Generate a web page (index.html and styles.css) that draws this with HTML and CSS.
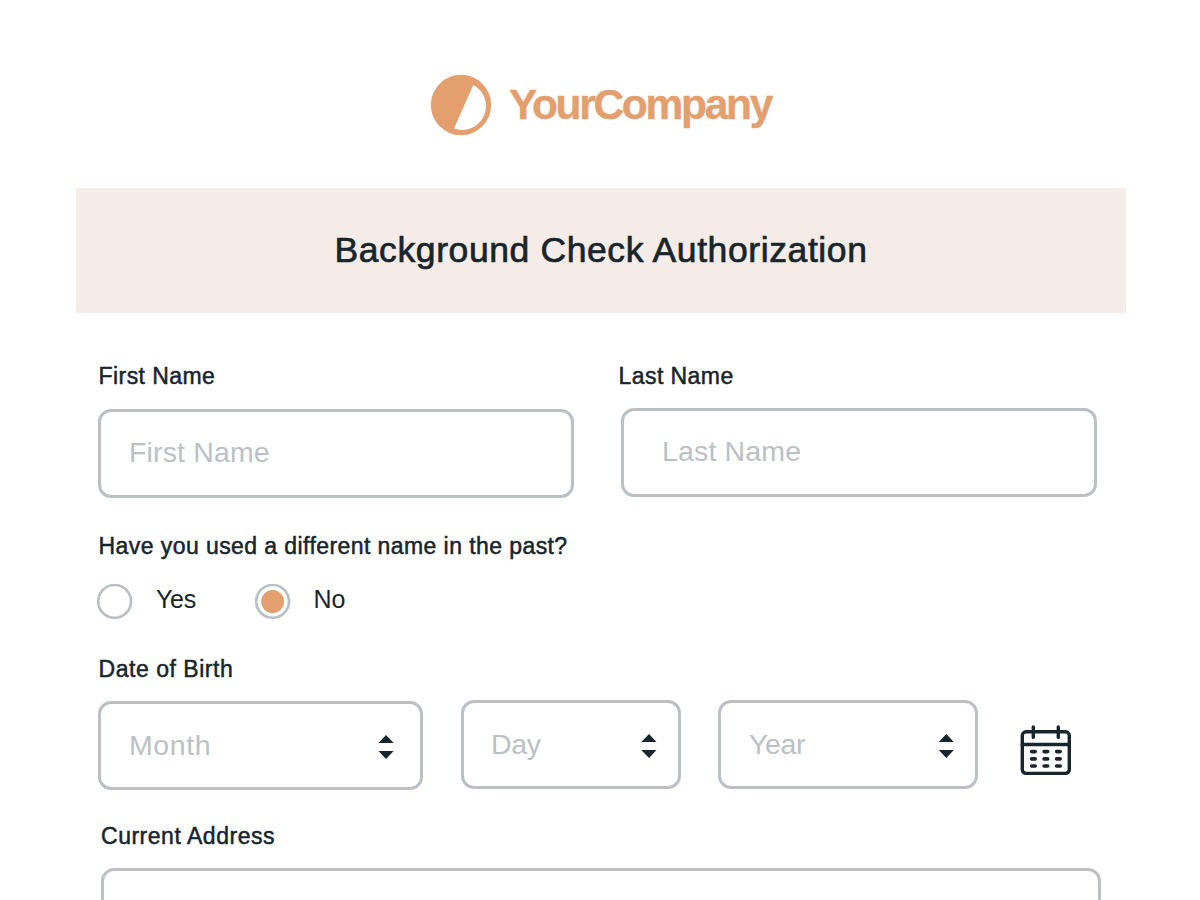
FILE: index.html
```html
<!DOCTYPE html>
<html lang="en">
<head>
<meta charset="utf-8">
<title>Background Check Authorization</title>
<link rel="stylesheet" href="styles.css">
</head>
<body>
<main class="page">
  <header class="brand">
    <svg class="brand-mark" width="62" height="62" viewBox="0 0 62 62">
      <circle cx="31" cy="31" r="30.2" fill="#e49f6f"/>
      <path d="M43.3 10.9 A23.95 23.95 0 0 1 24 54.6 Z" fill="#fff"/>
    </svg>
    <span class="brand-name">YourCompany</span>
  </header>
  <h1 class="banner"><span>Background Check Authorization</span></h1>
  <form class="form">
    <div class="names">
      <div class="field">
        <div class="label">First Name</div>
        <div class="box box-first"><span>First Name</span></div>
      </div>
      <div class="field">
        <div class="label label-last">Last Name</div>
        <div class="box box-last"><span>Last Name</span></div>
      </div>
    </div>
    <div class="label label-question">Have you used a different name in the past?</div>
    <div class="radios">
      <svg class="radio" width="36" height="36" viewBox="0 0 36 36"><circle class="ring" cx="17.6" cy="17.4" r="16.4"/></svg>
      <span class="option option-yes">Yes</span>
      <svg class="radio" width="36" height="36" viewBox="0 0 36 36"><circle class="ring" cx="17.6" cy="17.4" r="16.4"/><circle class="dot" cx="17.6" cy="17.6" r="11.5"/></svg>
      <span class="option">No</span>
    </div>
    <div class="label label-birth">Date of Birth</div>
    <div class="dates">
      <div class="box box-month"><span class="month">Month</span><svg class="sort" width="16" height="24" viewBox="0 0 16 24"><path d="M8 0 15.7 8H.5ZM8 24 .5 16h15.2Z"/></svg></div>
      <div class="box box-day"><span class="day">Day</span><svg class="sort" width="16" height="24" viewBox="0 0 16 24"><path d="M8 0 15.5 8H.3ZM8 24 .3 16h15.2Z"/></svg></div>
      <div class="box box-year"><span class="year">Year</span><svg class="sort" width="16" height="24" viewBox="0 0 16 24"><path d="M8.3 0 15.8 8H.8ZM8.3 24 .8 16h15Z"/></svg></div>
      <svg class="calendar" width="52" height="52" viewBox="0 0 52 52">
        <rect x="2.3" y="6.8" width="47" height="41.6" rx="3.8"/>
        <path d="M2.2 19.5H49.4M13.3 2V12.4M38.3 2V12.4"/>
        <path class="days" d="M11.6 26.6h3.6M24.1 26.6h3.6M36.6 26.6h3.6M11.6 33.9h3.6M24.1 33.9h3.6M36.6 33.9h3.6M11.6 41h3.6M24.1 41h3.6M36.6 41h3.6"/>
      </svg>
    </div>
    <div class="label label-address">Current Address</div>
    <div class="box box-address"></div>
  </form>
</main>
</body>
</html>
```
FILE: styles.css
```css
* { box-sizing: border-box; }
body {
  margin: 0;
  background: #fff;
  color: #17252c;
  font-family: "Liberation Sans", Arial, sans-serif;
}
.page { width: 1200px; height: 900px; overflow: hidden; }
.brand {
  display: flex;
  height: 187.5px;
  padding: 74px 0 0 430px;
}
.brand-mark { flex: none; }
.brand-name {
  margin: 3px 0 0 17px;
  color: #e49f6f;
  font-size: 42.5px;
  font-weight: 700;
  line-height: 55px;
  letter-spacing: -2.3px;
  -webkit-text-stroke: 0.4px #e49f6f;
}
.banner {
  display: flex;
  justify-content: center;
  width: 1050px;
  height: 125px;
  margin: 0 0 0 76px;
  padding-top: 38px;
  background: #f6ece7;
  font-size: 35.5px;
  font-weight: 400;
  line-height: 48px;
  letter-spacing: 0.6px;
  -webkit-text-stroke: 0.7px #17252c;
}
.form { padding: 48.5px 0 0 98px; }
.names { display: flex; gap: 47px; }
.label {
  height: 30px;
  padding-left: 0.6px;
  font-size: 23px;
  line-height: 30px;
  letter-spacing: 0.42px;
  white-space: nowrap;
  -webkit-text-stroke: 0.5px #17252c;
}
.box {
  display: flex;
  justify-content: space-between;
  height: 89px;
  padding: 22px 26px 0 28px;
  border: 3px solid #bac1c5;
  border-radius: 13px;
  color: #bac1c5;
  font-size: 28.5px;
  line-height: 36px;
  letter-spacing: 0.15px;
}
.box-first { width: 476px; margin-top: 18px; }
.box-last { width: 476px; margin-top: 17px; padding-left: 38px; }
.label-last { margin-left: -3px; }
.label-question { margin-top: 33px; }
.radios {
  display: flex;
  align-items: flex-start;
  height: 36px;
  margin: 23px 0 0 -1px;
  padding-top: 1px;
}
.radio { flex: none; margin-top: -1px; }
.ring { fill: none; stroke: #bac1c5; stroke-width: 2.7; }
.dot { fill: #e49f6f; }
.option {
  margin: -2px 0 0 23px;
  font-size: 25px;
  line-height: 32px;
}
.option-yes { width: 98.5px; letter-spacing: -0.3px; }
.label-birth { margin-top: 34px; letter-spacing: 0.52px; }
.dates { display: flex; margin-top: 16px; }
.month { letter-spacing: 0.6px; }
.day, .year { letter-spacing: -0.4px; }
.day { margin-left: -1px; }
.month, .day, .year { padding-top: 1px; }
.box-month { width: 325px; margin-top: 1px; }
.box-day { width: 220px; margin-left: 38px; padding-right: 21px; }
.box-year { width: 260px; margin-left: 37px; padding-right: 21px; }
.sort { margin-top: 9px; fill: #17252c; }
.calendar {
  margin: 25px 0 0 42px;
  fill: none;
  stroke: #17252c;
  stroke-width: 3.4;
  stroke-linecap: round;
}
.calendar .days { stroke-width: 3.6; }
.label-address { margin: 31px 0 0 3px; padding-left: 0; letter-spacing: 0.52px; }
.box-address { width: 1000px; margin: 17px 0 0 3px; }
```
